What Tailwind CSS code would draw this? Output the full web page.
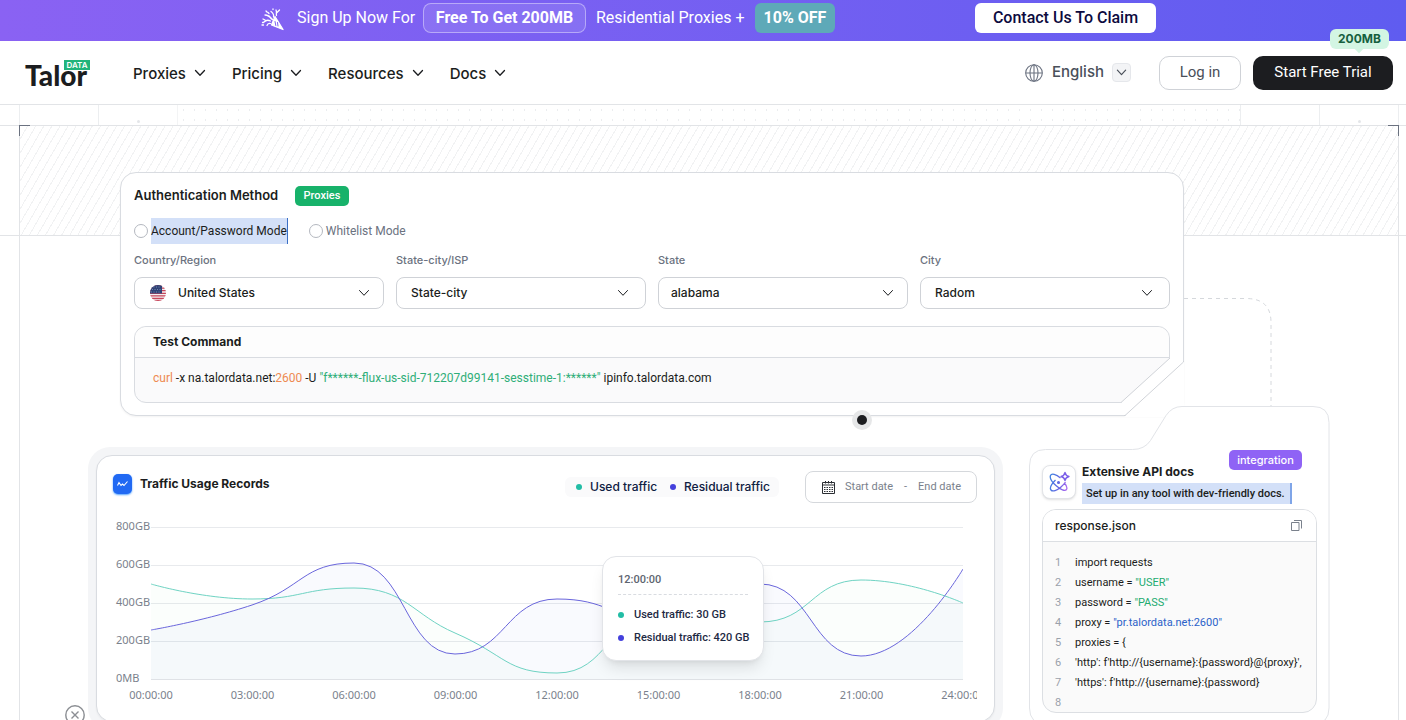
<!DOCTYPE html>
<html lang="en">
<head>
<meta charset="utf-8">
<title>TalorData</title>
<script src="https://cdn.jsdelivr.net/npm/@tailwindcss/browser@4"></script>
</head>
<body class="bg-white">
<svg class="hidden" aria-hidden="true">
  <symbol id="chev" viewBox="0 0 12 12"><path d="M1.500 3.500 6 8.300l4.500-4.800" fill="none" stroke="currentColor" stroke-linecap="round" stroke-linejoin="round"/></symbol>
</svg>
<div class="relative flex h-screen flex-col overflow-hidden font-['Inter',sans-serif] text-[#1b1d20]">

  <!-- Promo banner -->
  <div class="flex h-[41px] shrink-0 items-start bg-linear-to-r from-[#8a62f3] to-[#5f5cf0] pt-[3px] pl-[261px] font-['Roboto',sans-serif] text-base text-white">
    <svg class="mt-[5px] size-[23px] shrink-0" viewBox="0 0 23 23" fill="none" stroke="#fff" stroke-width="1.3" stroke-linecap="round">
      <path d="M14 8.500 10.500 17 22 21.500Z" fill="#fff" stroke-linejoin="round"/>
      <path d="M12.500 9C13 7 12 5 10 3.500M10.500 11C9 9 7 7 4 7M9.500 13C7.500 12 5 12 3 14M15.500 7.500C15 6 16 4 15 2M9.500 15.500C8 15 6.500 16 6 17.500M11.500 11.500 8 8M15.500 5l3-3M2 11l2 1M5 3l1 1M1 17h1.500M12 1v.5M7 4.500l1 1M1.500 14.500h1"/>
      <path d="m14 13.500 .8 4M16.500 14.500l.5 3.500" stroke="#7d60f3" stroke-width="1"/>
    </svg>
    <span class="ml-[13px] w-[116px] whitespace-nowrap leading-[29px]">Sign Up Now For</span>
    <span class="ml-[10px] flex h-[30px] w-[163px] items-center justify-center whitespace-nowrap rounded-lg border border-white/40 bg-white/10 font-bold">Free To Get 200MB</span>
    <span class="ml-[10px] w-[149px] whitespace-nowrap leading-[29px]">Residential Proxies +</span>
    <span class="ml-[10px] flex h-[30px] w-20 items-center justify-center whitespace-nowrap rounded-md bg-[#5ea9b8] font-bold">10% OFF</span>
    <a href="#" class="ml-[140px] flex h-[30px] w-[181px] items-center justify-center whitespace-nowrap rounded-md bg-white font-medium text-[#0c0a3e]">Contact Us To Claim</a>
  </div>

  <!-- Navigation -->
  <header class="flex h-16 shrink-0 items-center border-b border-[#e2e4e7] bg-white pr-[13px] pl-[25px]">
    <a href="#" class="relative flex h-9 w-[65px] items-end font-['Lato',sans-serif] text-[28px] leading-8 font-black" aria-label="Talor Data">
      <span class="text-[#1b1d20]">Talor</span>
      <span class="absolute top-[5px] right-0 flex h-[10px] w-[26px] items-center justify-center bg-[#21b47b] font-['Inter',sans-serif] text-[8px] leading-none font-semibold text-white">DATA</span>
    </a>
    <nav class="ml-[43px] flex items-center gap-[26px] pt-[3px] text-[15px] font-medium">
      <a href="#" class="flex items-center gap-2">Proxies<svg class="mb-0.5 size-3 stroke-[1.3]"><use href="#chev"/></svg></a>
      <a href="#" class="flex items-center gap-2">Pricing<svg class="mb-0.5 size-3 stroke-[1.3]"><use href="#chev"/></svg></a>
      <a href="#" class="flex items-center gap-2">Resources<svg class="mb-0.5 size-3 stroke-[1.3]"><use href="#chev"/></svg></a>
      <a href="#" class="flex items-center gap-2">Docs<svg class="mb-0.5 size-3 stroke-[1.3]"><use href="#chev"/></svg></a>
    </nav>
    <div class="ml-auto flex items-center">
      <button class="flex items-center text-[15px] font-medium text-[#4a505a]">
        <svg class="size-[18px]" viewBox="0 0 18 18" fill="none" stroke="#6b7280" stroke-width="1.1"><circle cx="9" cy="9" r="8.300"/><ellipse cx="9" cy="9" rx="4" ry="8.300"/><path d="M.7 9h16.600M9 .7v16.600"/></svg>
        <span class="ml-[9px]">English</span>
        <span class="ml-2 flex size-[19px] items-center justify-center rounded-sm border border-[#e5e7eb] bg-[#f3f4f6]"><svg class="size-[11px] stroke-[1.3]"><use href="#chev"/></svg></span>
      </button>
      <a href="#" class="ml-7 flex h-[34px] w-[82px] items-center justify-center rounded-[10px] border border-[#cfd2d7] font-['Roboto',sans-serif] text-[15px] text-[#4a505a]">Log in</a>
      <div class="relative ml-3">
        <a href="#" class="flex h-[34px] w-[140px] items-center justify-center rounded-[10px] bg-[#1c1d20] font-['Roboto',sans-serif] text-[15px] text-white">Start Free Trial</a>
        <span class="absolute -top-[27px] right-1 flex h-5 w-[59px] items-center justify-center rounded-md bg-[#d3f5e3] text-xs font-bold text-[#16603f]">200MB<i class="absolute -bottom-[3px] left-[26px] size-[6px] rotate-45 bg-[#d3f5e3]"></i></span>
      </div>
    </div>
  </header>

  <main class="relative flex-1 overflow-hidden">
    <!-- Guide lines behind the cards -->
    <div class="absolute inset-0" aria-hidden="true">
      <div class="relative mr-[7px] ml-[19px] flex h-5 border-x border-[#eceef0]">
        <div class="w-[79px] border-r border-[#eceef0]"></div>
        <div class="w-[79px] border-r border-[#f3f4f5]"></div>
        <div class="flex-1 bg-[radial-gradient(circle,#ebedef_1px,transparent_1px)] bg-size-[11px_10px]"></div>
        <div class="w-[79px] border-l border-[#eceef0]"></div>
        <div class="w-[79px] border-l border-[#eceef0]"></div>
        <i class="absolute bottom-[2px] left-[117px] size-[3px] rounded-full bg-[#e4e6e9]"></i>
        <i class="absolute right-[37px] bottom-[2px] size-[3px] rounded-full bg-[#e4e6e9]"></i>
      </div>
      <div class="h-[111px] border-y border-[#e2e4e7] pr-[7px] pl-[19px]">
        <div class="h-full bg-[repeating-linear-gradient(120deg,#f1f2f3_0px,#f1f2f3_1px,transparent_1px,transparent_7px)]"></div>
      </div>
      <div class="absolute top-5 right-[7px] bottom-0 left-[19px] border-x border-[#e2e4e7]">
        <i class="absolute -left-px top-0 size-[11px] border-t border-l border-[#6b7280]"></i>
        <i class="absolute -right-px top-0 size-[11px] border-t border-r border-[#6b7280]"></i>
      </div>
    </div>

    <div class="relative pt-[67px] pr-[76px] pl-[88px]">
      <!-- Authentication card -->
      <section class="relative mr-[146px] ml-8 rounded-[16px] border border-[#d9dce1] bg-white px-[13px] pt-[13px] pb-3 shadow-xs">
        <svg class="absolute top-[124px] left-full h-[110px] w-[90px]" viewBox="0 0 90 110" fill="none" stroke="#d5d8dc" stroke-dasharray="4 4"><path d="M1 1.500h62q25 0 25 24V110"/></svg>
        <div class="flex h-5 items-center">
          <h2 class="w-[161px] whitespace-nowrap text-[13px] font-semibold">Authentication Method</h2>
          <span class="flex h-5 w-[54px] items-center justify-center rounded-[5px] bg-[#17b26a] font-['Roboto',sans-serif] text-[11px] font-medium text-white">Proxies</span>
        </div>
        <div class="mt-3 flex h-[26px] items-center font-['Roboto',sans-serif] text-xs">
          <label class="flex items-center gap-[3px]"><input type="radio" name="mode" class="size-[14px] appearance-none rounded-full border border-[#b4b8bf]"><span class="whitespace-nowrap border-r border-[#3a6fc4] bg-[#d3e0f8] leading-[26px]">Account/Password Mode</span></label>
          <label class="ml-[21px] flex items-center gap-[3px] whitespace-nowrap text-[#6b7280]"><input type="radio" name="mode" class="size-[14px] appearance-none rounded-full border border-[#b4b8bf]">Whitelist Mode</label>
        </div>
        <div class="mt-2 grid grid-cols-4 gap-3">
          <div>
            <label for="country" class="block text-[11px] leading-4 font-medium text-[#6b7280]">Country/Region</label>
            <div class="relative mt-[9px]">
              <select id="country" class="block h-8 w-full appearance-none rounded-lg border border-[#cfd2d7] bg-white pl-[43px] text-xs font-medium"><option>United States</option></select>
              <svg class="absolute top-2 left-4 size-4" viewBox="0 0 16 16"><clipPath id="fl"><circle cx="8" cy="8" r="8"/></clipPath><g clip-path="url(#fl)"><path fill="#f3eff1" d="M0 0h16v16H0z"/><path stroke="#c8465a" stroke-width="1.300" d="M0 .6h16M0 3.200h16M0 5.700h16M0 8.300h16M0 10.800h16M0 13.300h16M0 15.500h16"/><path fill="#2f4376" d="M0 0h12v8.500H0z"/><path stroke="#8c99bd" stroke-dasharray="1 1.500" d="M1 2h10M2 4.500h9M1 7h10" stroke-width=".8"/></g></svg>
              <svg class="pointer-events-none absolute top-[10px] right-[14px] size-3"><use href="#chev"/></svg>
            </div>
          </div>
          <div>
            <label for="isp" class="block text-[11px] leading-4 font-medium text-[#6b7280]">State-city/ISP</label>
            <div class="relative mt-[9px]">
              <select id="isp" class="block h-8 w-full appearance-none rounded-lg border border-[#cfd2d7] bg-white pl-[14px] text-xs font-medium"><option>State-city</option></select>
              <svg class="pointer-events-none absolute top-[10px] right-[17px] size-3"><use href="#chev"/></svg>
            </div>
          </div>
          <div>
            <label for="state" class="block text-[11px] leading-4 font-medium text-[#6b7280]">State</label>
            <div class="relative mt-[9px]">
              <select id="state" class="block h-8 w-full appearance-none rounded-lg border border-[#cfd2d7] bg-white pl-3 text-xs font-medium"><option>alabama</option></select>
              <svg class="pointer-events-none absolute top-[10px] right-[14px] size-3"><use href="#chev"/></svg>
            </div>
          </div>
          <div>
            <label for="city" class="block text-[11px] leading-4 font-medium text-[#6b7280]">City</label>
            <div class="relative mt-[9px]">
              <select id="city" class="block h-8 w-full appearance-none rounded-lg border border-[#cfd2d7] bg-white pl-[14px] text-xs font-medium"><option>Radom</option></select>
              <svg class="pointer-events-none absolute top-[10px] right-[17px] size-3"><use href="#chev"/></svg>
            </div>
          </div>
        </div>
        <div class="relative mt-[17px] rounded-xl border border-[#d9dce1] bg-[#fafafb]">
          <h3 class="rounded-t-xl border-b border-[#d9dce1] bg-[#fdfdfd] pl-[18px] text-xs leading-[30px] font-bold">Test Command</h3>
          <code class="block whitespace-nowrap pb-1 pl-[18px] font-['Roboto',sans-serif] text-xs leading-10"><span class="text-[#ee8a52]">curl</span> -x na.talordata.net:<span class="text-[#ee8a52]">2600</span> -U <span class="text-[#2fae78]">"f******-flux-us-sid-712207d99141-sesstime-1:******"</span> ipinfo.talordata.com</code>
          <svg class="absolute -right-px -bottom-px h-[45px] w-[49px]" viewBox="0 0 49 45"><path d="M49 0 0 45h49Z" fill="#fff"/><path d="M49 0 0 44.500" fill="none" stroke="#d0d3d8"/></svg>
        </div>
        <svg class="absolute -right-px -bottom-[2px] h-[56px] w-[60px]" viewBox="0 0 60 56"><path d="M60 0 0 56h60Z" fill="#fff"/><path d="M59.500 0v1L1 54.500H0" fill="none" stroke="#d0d3d8"/></svg>
      </section>

      <div class="flex items-start">
        <!-- Traffic card -->
        <section class="mt-[31px] min-w-0 flex-1 rounded-[22px] bg-[#f4f5f7] p-2">
          <div class="overflow-hidden rounded-[16px] border border-[#d9dce1] bg-white pt-[15px] pb-[18px] pl-4 shadow-xs">
            <div class="flex items-center pr-[17px]">
              <div class="flex items-center gap-2 pb-1.5">
                <svg class="h-5 w-[19px] rounded-[5px] bg-[#2169f3] shadow-xs shadow-blue-400" viewBox="0 0 19 20"><path d="m4.500 11.500 1.500-3 2 3 1.500-1.500 1.500 1.500 3.500-4" fill="none" stroke="#fff" stroke-width="1.100"/></svg>
                <h2 class="text-xs font-bold">Traffic Usage Records</h2>
              </div>
              <div class="ml-auto flex h-5 w-[214px] items-center rounded-md bg-[#fafafb] pl-[11px] text-xs font-medium whitespace-nowrap text-[#0f2042]">
                <i class="mr-2 size-[6px] shrink-0 rounded-full bg-[#22bda5]"></i><span class="w-[66px]">Used traffic</span>
                <i class="mr-2 ml-[14px] size-[6px] shrink-0 rounded-full bg-[#4440dc]"></i>Residual traffic
              </div>
              <button class="ml-[26px] flex h-8 w-[172px] items-center rounded-lg border border-[#d5d8dc] pl-4 font-['Roboto',sans-serif] text-[11px] whitespace-nowrap text-[#7a818c]">
                <svg class="mr-[10px] size-[13px]" viewBox="0 0 13 13" fill="none" stroke="#2b2e33"><path d="M.5 1.500h12v11H.5zM.5 4h12M3.500 0v2.500M6.500 0v2.500M9.500 0v2.500"/><path d="M2 6.500h9M2 8.500h9M2 10.500h9" stroke-dasharray="1.500 1"/></svg>
                <span>Start date</span><span class="mx-[11px]">-</span><span>End date</span>
              </button>
            </div>

            <div class="mr-[17px] flex overflow-hidden pt-[15px] pl-[3px] font-['Noto_Sans',sans-serif] text-[11px] text-[#7a818c]">
              <div class="flex w-[35px] shrink-0 flex-col gap-[22px] leading-4">
                <span>800GB</span><span>600GB</span><span>400GB</span><span>200GB</span><span>0MB</span>
              </div>
              <div class="relative mr-[14px] min-w-0 flex-1 pt-[9px]">
                <svg class="block h-[154px] w-full" viewBox="0 0 812 154" preserveAspectRatio="none" fill="none">
                  <path d="M0 .5h812M0 38.500h812M0 76.500h812M0 114.500h812" stroke="#e8eaed"/>
                  <path d="M0 152.500h812" stroke="#dfe2e6"/>
                  <path fill="#22c55e" fill-opacity=".02" d="M0 57C0 57 51 72 101 72S152 61 203 61C254 61 262 88 304 106C355 128 355 146 406 146S457 88 507 88S558 95 609 95S660 53 710 53C761 53 812 76 812 76V152H0Z"/>
                  <path fill="#4f5fe8" fill-opacity=".03" d="M0 103C0 103 53 94 101 78C152 61 152 36 203 36C254 36 254 127 304 127S355 72 406 72S457 91 507 91S558 57 609 57S660 129 710 129C761 129 812 42 812 42V152H0Z"/>
                  <path stroke="#6fd3c3" d="M0 57C0 57 51 72 101 72S152 61 203 61C254 61 262 88 304 106C355 128 355 146 406 146S457 88 507 88S558 95 609 95S660 53 710 53C761 53 812 76 812 76"/>
                  <path stroke="#6a66dc" d="M0 103C0 103 53 94 101 78C152 61 152 36 203 36C254 36 254 127 304 127S355 72 406 72S457 91 507 91S558 57 609 57S660 129 710 129C761 129 812 42 812 42"/>
                </svg>
                <div class="-ml-[6.25%] grid w-[112.5%] grid-cols-9 pt-1.5 text-center leading-4">
                  <span>00:00:00</span><span>03:00:00</span><span>06:00:00</span><span>09:00:00</span><span>12:00:00</span><span>15:00:00</span><span>18:00:00</span><span>21:00:00</span><span>24:00:00</span>
                </div>
                <div class="absolute top-[38px] left-[451px] h-[105px] w-[162px] rounded-[14px] border border-[#e2e4e8] bg-white px-[15px] pt-[15px] font-['Roboto',sans-serif] whitespace-nowrap text-[#1e2a44] shadow-lg">
                  <p class="border-b border-dashed border-[#d9dce1] pb-[7px] text-[11px] leading-[15px] font-medium text-[#5d6470]">12:00:00</p>
                  <p class="mt-3 flex items-center text-[11px] leading-4 font-medium"><i class="mr-[10px] size-[6px] shrink-0 rounded-full bg-[#22bda5]"></i>Used traffic: 30 GB</p>
                  <p class="mt-[7px] flex items-center text-[11px] leading-4 font-medium"><i class="mr-[10px] size-[6px] shrink-0 rounded-full bg-[#4440dc]"></i>Residual traffic: 420 GB</p>
                </div>
              </div>
            </div>
          </div>
        </section>

        <!-- API docs card -->
        <section class="relative -mt-[10px] ml-[26px] w-[301px] shrink-0 px-[13px] pt-[44px] pb-[11px]">
          <svg class="absolute inset-0 h-[319px] w-[301px]" viewBox="0 0 301 319"><path d="M.5 60q0-16.500 16-16.500h87q12 0 18-9L137 9.500Q143 .5 153 .5H284q16 0 16 16V302q0 16-16 16H17q-16.500 0-16.500-16Z" fill="#fff" stroke="#e2e4e8"/></svg>
          <div class="relative flex h-[59px] pt-[15px]">
            <div class="flex size-[34px] items-center justify-center rounded-lg border border-[#e2e4e8] bg-white shadow-sm">
              <svg class="size-[22px]" viewBox="0 0 22 22" fill="none" stroke="url(#ag)" stroke-width="1.300"><linearGradient id="ag" gradientUnits="userSpaceOnUse" x1="2" y1="10" x2="20" y2="14"><stop stop-color="#3f7fe0"/><stop offset=".6" stop-color="#6c62e4"/><stop offset="1" stop-color="#b06af0"/></linearGradient><path d="M12.500 7C8 3 3.500 2 2.500 4.500c-1 2.500 2 7 6 10.500s8.500 5.500 10 3.500c1-1.500 0-4-2-6.500M7.500 9C3.500 13 1.500 17 3 19s6 .5 10-3c2-1.700 3.500-3.500 4.500-5"/><circle cx="10.500" cy="11.500" r=".9" fill="#5b6fe2"/><path d="M17 1.500q.7 3.300 4 4-3.300.7-4 4-.7-3.300-4-4 3.300-.7 4-4Z" stroke="#7b5fe8" stroke-linejoin="round"/></svg>
            </div>
            <div class="ml-[6px]">
              <h2 class="-mt-px text-xs leading-[15px] font-bold whitespace-nowrap">Extensive API docs</h2>
              <p class="mt-1 w-[210px] border-r-2 border-[#7fa5e8] bg-[#d3e0f8] pl-1 font-['Roboto',sans-serif] text-[11px] leading-[21px] font-medium whitespace-nowrap">Set up in any tool with dev-friendly docs.</p>
            </div>
            <span class="absolute top-0 right-[15px] flex h-5 w-[73px] items-center justify-center rounded-[5px] bg-[#8f63f5] text-[11px] font-medium text-white">integration</span>
          </div>
          <div class="relative overflow-hidden rounded-[14px] border border-[#dcdfe3] bg-[#fafafa]">
            <div class="flex h-8 items-center justify-between border-b border-[#dcdfe3] bg-white pr-[14px] pl-3">
              <h3 class="text-xs font-medium">response.json</h3>
              <button aria-label="Copy"><svg class="block size-[11px]" viewBox="0 0 11 11" fill="none" stroke="#7a818c"><path d="M.5 2.500h7.500v8H.5zM3 .5h7.500v8"/></svg></button>
            </div>
            <ol class="h-[170px] pt-[11px] pl-3 font-['Roboto',sans-serif] text-[11px] leading-5 whitespace-nowrap">
              <li class="flex h-5"><span class="w-5 shrink-0 text-[#9aa1ab]">1</span><code class="font-['Roboto',sans-serif]">import requests</code></li>
              <li class="flex h-5"><span class="w-5 shrink-0 text-[#9aa1ab]">2</span><code class="font-['Roboto',sans-serif]">username = <span class="text-[#22ab70]">"USER"</span></code></li>
              <li class="flex h-5"><span class="w-5 shrink-0 text-[#9aa1ab]">3</span><code class="font-['Roboto',sans-serif]">password = <span class="text-[#22ab70]">"PASS"</span></code></li>
              <li class="flex h-5"><span class="w-5 shrink-0 text-[#9aa1ab]">4</span><code class="font-['Roboto',sans-serif]">proxy = <span class="text-[#2b62c9]">"pr.talordata.net:2600"</span></code></li>
              <li class="flex h-5"><span class="w-5 shrink-0 text-[#9aa1ab]">5</span><code class="font-['Roboto',sans-serif]">proxies = {</code></li>
              <li class="flex h-5"><span class="w-5 shrink-0 text-[#9aa1ab]">6</span><code class="font-['Roboto',sans-serif]">'http': f'http://{username}:{password}@{proxy}',</code></li>
              <li class="flex h-5"><span class="w-5 shrink-0 text-[#9aa1ab]">7</span><code class="font-['Roboto',sans-serif]">'https': f'http://{username}:{password}</code></li>
              <li class="flex h-5"><span class="w-5 shrink-0 text-[#9aa1ab]">8</span></li>
            </ol>
          </div>
        </section>
      </div>
    </div>

    <!-- Pointer marker and dismiss button float over the page -->
    <span class="absolute top-[305px] left-[852px] flex size-5 items-center justify-center rounded-full bg-[#e6e7e8]"><i class="size-[10px] rounded-full bg-[#1c1d20]"></i></span>
    <button aria-label="Close" class="absolute -bottom-[5px] left-[65px]"><svg class="block size-[20px]" viewBox="0 0 20 20" fill="#fff" stroke="#8b8e93" stroke-width="1.400"><circle cx="10" cy="10" r="9.200"/><path d="m6.500 6.500 7 7m0-7-7 7"/></svg></button>
  </main>
</div>
</body>
</html>
